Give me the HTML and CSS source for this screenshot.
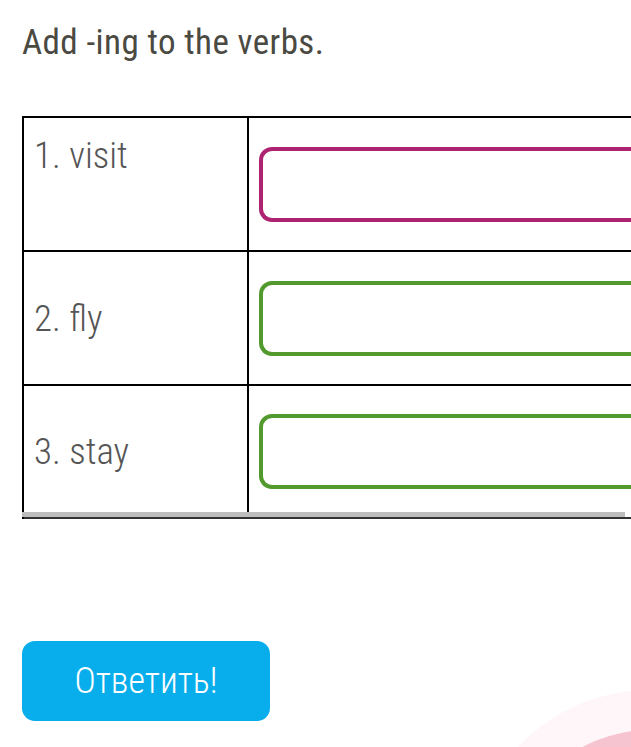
FILE: index.html
```html
<!DOCTYPE html>
<html lang="en">
<head>
  <meta charset="UTF-8" />
  <title>Add -ing to the verbs</title>
  <link rel="stylesheet" href="styles.css">
</head>
<body>
  <div class="decor">
    <div class="blob-halo"></div>
    <div class="blob"></div>
  </div>

  <main class="task">
    <h1 class="task-title">Add -ing to the verbs.</h1>

    <div class="scroller">
      <div class="answer-table">
        <div class="row row-first">
          <div class="word">1. visit</div>
          <div class="field"><input class="answer wrong" type="text" /></div>
        </div>
        <div class="row">
          <div class="word">2. fly</div>
          <div class="field"><input class="answer right" type="text" /></div>
        </div>
        <div class="row row-last">
          <div class="word">3. stay</div>
          <div class="field"><input class="answer right" type="text" /></div>
        </div>
      </div>
      <div class="scrollbar"></div>
    </div>

    <button class="submit">Ответить!</button>
  </main>
</body>
</html>
```

FILE: styles.css
```css
/* Reset */
* {
  box-sizing: border-box;
  margin: 0;
  padding: 0;
}
html, body {
  height: 100%;
  overflow: hidden;
}
body {
  font-family: Roboto, "Noto Sans", sans-serif;
  background: #fff;
  color: #4a4a44;
  position: relative;
}
.task {
  position: relative;
}

/* Title */
.task-title {
  font-weight: 400;
  font-size: 35px;
  font-stretch: 75%;
  letter-spacing: 0.4px;
  line-height: 41px;
  padding: 22px 0 0 22px;
  color: #4a4a42;
}

.scroller {
  position: relative;
  margin: 53px 0 0 22px;
  overflow: hidden;
}
.answer-table {
  border-top: 2px solid #000;
  border-left: 2px solid #000;
}
.row {
  display: flex;
  height: 134px;
  border-bottom: 2px solid #000;
}
.row-last {
  height: 133px;
  border-bottom-color: #333;
}
.word {
  flex: 0 0 225px;
  border-right: 2px solid #000;
  padding-left: 10px;
  display: flex;
  align-items: center;
  font-size: 37px;
  font-weight: 300;
  font-stretch: 75%;
  color: #555;
}
.row-first .word {
  align-items: flex-start;
  padding-top: 16px;
}
.field {
  flex: 1;
  min-width: 0;
  padding-left: 10px;
  display: flex;
  align-items: center;
}
.answer {
  flex: 0 0 420px;
  height: 75px;
  border: 4px solid #529a2e;
  border-right: none;
  border-radius: 13px 0 0 13px;
  background: #fff;
  outline: none;
}
.answer.wrong {
  border-color: #ad2370;
}
.scrollbar {
  position: absolute;
  left: 0;
  bottom: 2px;
  width: 603px;
  height: 5px;
  background: #bdbdbd;
}

/* Button */
.submit {
  margin: 122px 0 0 22px;
  width: 248px;
  height: 80px;
  border: none;
  border-radius: 13px;
  background: #08aeec;
  color: #fff;
  font-family: Roboto, "Noto Sans", sans-serif;
  font-size: 36px;
  font-weight: 300;
  font-stretch: 75%;
  cursor: pointer;
}

/* Decorative circle bottom right */
.decor {
  position: absolute;
  inset: 0;
  overflow: hidden;
}
.blob-halo {
  position: absolute;
  left: 468px;
  top: 690px;
  width: 364px;
  height: 364px;
  border-radius: 50%;
  background: #fef6f8;
}
.blob {
  position: absolute;
  left: 508px;
  top: 730px;
  width: 284px;
  height: 284px;
  border-radius: 50%;
  background: #f6c3d1;
}
```
